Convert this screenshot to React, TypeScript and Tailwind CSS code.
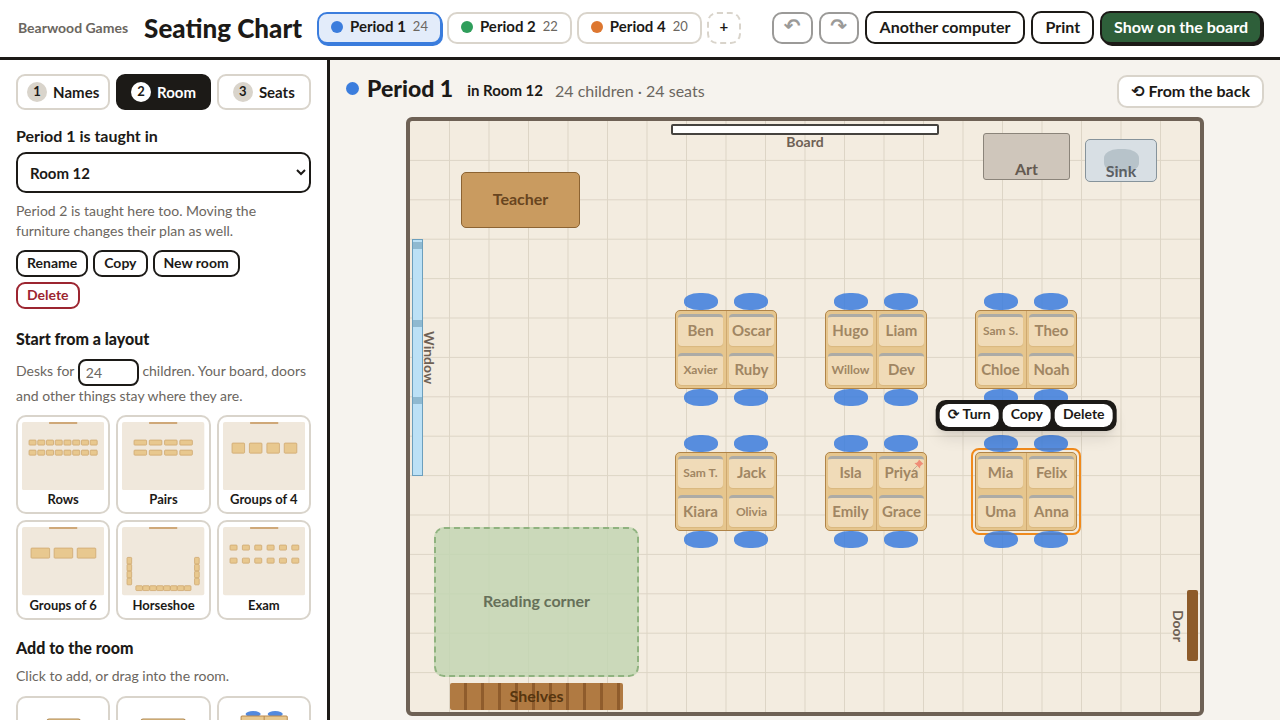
import type { CSSProperties, ReactNode } from "react";
import clsx from "clsx";

const periods = [
  { name: "Period 1", count: 24, dot: "bg-[#3b7ddd]", active: true },
  { name: "Period 2", count: 22, dot: "bg-[#2f9e5b]", active: false },
  { name: "Period 4", count: 20, dot: "bg-[#dd7730]", active: false },
];

const steps = [
  { n: 1, label: "Names" },
  { n: 2, label: "Room" },
  { n: 3, label: "Seats" },
];

type Rect = [x: number, y: number, w: number, h: number];

/** Desks on a grid of cols x rows inside an 82 x 68 thumbnail. */
function block(xs: number[], ys: number[], w: number, h: number): Rect[] {
  return ys.flatMap((y) => xs.map((x): Rect => [x, y, w, h]));
}

const layouts: { name: string; desks: Rect[] }[] = [
  { name: "Rows", desks: block([7, 15.7, 24.4, 33.1, 41.8, 50.5, 59.2, 67.9], [18, 28], 7, 5) },
  { name: "Pairs", desks: block([12, 27.2, 42.4, 57.6], [18, 28], 12.5, 5) },
  { name: "Groups of 4", desks: block([9, 26.3, 43.7, 61], [21], 12.5, 10) },
  { name: "Groups of 6", desks: block([9, 32, 55], [21], 18.5, 10) },
  {
    name: "Horseshoe",
    desks: [
      ...block([5, 72.3], [30.3, 37.2, 44.1, 51], 4.6, 6.6),
      ...block([13.8, 20.7, 27.6, 34.5, 41.4, 48.3, 55.2, 62.1], [58.5], 6.6, 4.8),
    ],
  },
  { name: "Exam", desks: block([7, 19.3, 31.6, 43.9, 56.2, 68.5], [18, 31], 7, 5) },
];

const ROOM_W = 790;
const ROOM_H = 591;

function place([x, y, w, h]: Rect): CSSProperties {
  return {
    left: `${(x / ROOM_W) * 100}%`,
    top: `${(y / ROOM_H) * 100}%`,
    width: `${(w / ROOM_W) * 100}%`,
    height: `${(h / ROOM_H) * 100}%`,
  };
}

const tables = [
  { x: 265, y: 189, names: ["Ben", "Oscar", "Xavier", "Ruby"] },
  { x: 415, y: 189, names: ["Hugo", "Liam", "Willow", "Dev"] },
  { x: 565, y: 189, names: ["Sam S.", "Theo", "Chloe", "Noah"] },
  { x: 265, y: 331, names: ["Sam T.", "Jack", "Kiara", "Olivia"] },
  { x: 415, y: 331, names: ["Isla", "Priya", "Emily", "Grace"], pinned: "Priya" },
  { x: 565, y: 331, names: ["Mia", "Felix", "Uma", "Anna"], selected: true },
];

function Heading({ children }: { children: ReactNode }) {
  return <h2 className="text-base leading-6 font-black">{children}</h2>;
}

function SmallButton({ children, danger }: { children: ReactNode; danger?: boolean }) {
  return (
    <button
      className={clsx(
        "h-[27px] rounded-[9px] border-2 bg-white px-[9px] pb-0.5 text-sm leading-5 font-bold",
        danger ? "border-[#9c2530] text-[#9c2530]" : "border-[#1c1a17]",
      )}
    >
      {children}
    </button>
  );
}

function LayoutCard({ name, desks }: { name: string; desks: Rect[] }) {
  return (
    <button className="flex flex-col items-stretch rounded-[10px] border-2 border-[#d9d4cb] bg-white px-1 pt-[5px] pb-1">
      <svg viewBox="0 0 82 68" className="w-full">
        <rect width="82" height="68" rx="2" fill="#f0e8dc" />
        <rect x="27" width="28" height="2" fill="#cfa878" />
        {desks.map(([x, y, w, h]) => (
          <rect key={`${x}-${y}`} x={x} y={y} width={w} height={h} rx="0.8" fill="#e8c88f" stroke="#d0a970" strokeWidth="0.8" />
        ))}
      </svg>
      <span className="text-[13px] leading-[18px] font-bold">{name}</span>
    </button>
  );
}

function PaletteCard({ children, label }: { children: ReactNode; label: string }) {
  return (
    <button className="flex flex-col items-stretch rounded-[10px] border-2 border-[#d9d4cb] bg-white px-1 pt-[5px] pb-1">
      <svg viewBox="0 0 82 68" className="w-full">
        {children}
      </svg>
      <span className="text-[13px] leading-[18px] font-bold">{label}</span>
    </button>
  );
}

function Sidebar() {
  return (
    <aside className="w-[330px] shrink-0 overflow-y-auto border-r-3 border-[#1c1a17] bg-white px-4 py-3.5 [scrollbar-width:none]">
      <nav className="grid grid-cols-3 gap-1.5">
        {steps.map(({ n, label }) => {
          const active = n === 2;
          return (
            <button
              key={n}
              className={clsx(
                "flex h-9 items-center justify-center gap-1.5 rounded-[9px] border-2 text-[15px] font-bold",
                active ? "border-[#1c1a17] bg-[#1c1a17] text-white" : "border-[#d9d4cb] bg-white",
              )}
            >
              <span
                className={clsx(
                  "flex size-5 items-center justify-center rounded-full text-[13px] text-[#1c1a17]",
                  active ? "bg-white" : "bg-[#d9d4cb]",
                )}
              >
                {n}
              </span>
              {label}
            </button>
          );
        })}
      </nav>

      <section className="mt-3.5">
        <label htmlFor="room" className="block text-base leading-6 font-bold">
          Period 1 is taught in
        </label>
        <select id="room" className="mt-1 h-[41px] w-full rounded-[10px] border-2 border-[#1c1a17] bg-white px-2 text-[15px] font-bold">
          <option>Room 12</option>
        </select>
        <p className="mt-2 text-sm leading-5 text-[#6b6660]">
          Period 2 is taught here too. Moving the furniture changes their plan as well.
        </p>
        <div className="mt-[9px] flex flex-wrap gap-[5px] pr-3">
          <SmallButton>Rename</SmallButton>
          <SmallButton>Copy</SmallButton>
          <SmallButton>New room</SmallButton>
          <SmallButton danger>Delete</SmallButton>
        </div>
      </section>

      <section className="mt-[18px]">
        <Heading>Start from a layout</Heading>
        <p className="mt-2 text-sm leading-5 text-[#6b6660]">
          <label htmlFor="desks">Desks for</label>{" "}
          <input
            id="desks"
            type="text"
            inputMode="numeric"
            defaultValue="24"
            className="h-[27px] w-[61px] rounded-lg border-2 border-[#1c1a17] bg-white px-1.5 align-middle"
          />{" "}
          children. Your board, doors and other things stay where they are.
        </p>
        <div className="mt-[9px] grid grid-cols-3 gap-1.5">
          {layouts.map((l) => (
            <LayoutCard key={l.name} name={l.name} desks={l.desks} />
          ))}
        </div>
      </section>

      <section className="mt-4">
        <Heading>Add to the room</Heading>
        <p className="mt-1.5 text-sm leading-5 text-[#6b6660]">Click to add, or drag into the room.</p>
        <div className="mt-2.5 grid grid-cols-3 gap-1.5">
          <PaletteCard label="Desk">
            <rect x="25" y="16" width="33" height="26" rx="2" fill="#e8c88f" stroke="#b08a55" />
          </PaletteCard>
          <PaletteCard label="Pair">
            <rect x="19" y="16" width="44" height="26" rx="2" fill="#e8c88f" stroke="#b08a55" />
          </PaletteCard>
          <PaletteCard label="Table of 4">
            <ellipse cx="30" cy="11" rx="7.5" ry="3" fill="#5389dd" />
            <ellipse cx="52" cy="11" rx="7.5" ry="3" fill="#5389dd" />
            <rect x="18" y="13" width="46" height="34" rx="1" fill="#e8c88f" stroke="#b98a50" />
            <path d="M41 13v34" stroke="#b98a50" />
          </PaletteCard>
        </div>
      </section>
    </aside>
  );
}

function Header() {
  return (
    <header className="flex h-[60px] shrink-0 items-center border-b-3 border-[#1c1a17] bg-white pr-[18px] pb-0.5 pl-[18px]">
      <span className="text-sm font-bold text-[#6b6660]">Bearwood Games</span>
      <h1 className="ml-4 text-[26px] leading-8 font-black">Seating Chart</h1>

      <nav className="ml-[15px] flex items-center gap-[5px]">
        {periods.map((p) => (
          <button
            key={p.name}
            className={clsx(
              "flex h-8 items-center gap-[7px] rounded-[10px] border-2 px-3 pb-0.5 text-[15px] font-bold",
              p.active ? "border-[#3b7ddd] bg-[#e3ecfa] shadow-[1px_2px_0_#3b7ddd]" : "border-[#d9d4cb] bg-white",
            )}
          >
            <span className={clsx("size-3 rounded-full", p.dot)} />
            {p.name}
            <span className="text-[13px] font-normal text-[#6b6660]">{p.count}</span>
          </button>
        ))}
        <button aria-label="Add period" className="h-8 w-[34px] rounded-[10px] border-2 border-dashed border-[#d9d4cb] pb-0.5 text-[15px] font-bold">
          +
        </button>
      </nav>

      <div className="ml-auto flex items-center gap-1.5 text-base font-bold">
        <button aria-label="Undo" className="h-8 w-[41px] rounded-[10px] border-2 border-[#9b9a98] pb-1 font-['DejaVu_Sans'] text-xl leading-6 text-[#9b9a98]">
          ↶
        </button>
        <button aria-label="Redo" className="h-8 w-10 rounded-[10px] border-2 border-[#9b9a98] pb-1 font-['DejaVu_Sans'] text-xl leading-6 text-[#9b9a98]">
          ↷
        </button>
        <button className="h-[33px] rounded-[10px] border-2 border-[#1c1a17] px-[13px] pb-0.5">Another computer</button>
        <button className="h-[33px] rounded-[10px] border-2 border-[#1c1a17] px-3 pb-0.5">Print</button>
        <button className="h-[33px] rounded-[10px] border-2 border-[#1c1a17] bg-[#2e5f3a] px-3 pb-0.5 text-white shadow-[2px_2px_0_#1c1a17]">
          Show on the board
        </button>
      </div>
    </header>
  );
}

function Chair({ className }: { className: string }) {
  return <span className={clsx("absolute h-[22%] w-1/3 rounded-[45%] bg-[#3b7ddd]/85", className)} />;
}

function Pin() {
  return (
    <svg viewBox="0 0 12 12" className="absolute top-0 right-0 size-3 opacity-60">
      <path d="M5.4 6.6 1 11" stroke="#9a8f88" strokeWidth="1" />
      <path d="M7 .6 11.4 5 10 5.6 8.2 7.2 8 9.6 2.4 4 4.8 3.8 6.4 2Z" fill="#ef5a4c" />
    </svg>
  );
}

function Table({ x, y, names, selected, pinned }: { x: number; y: number; names: string[]; selected?: boolean; pinned?: string }) {
  return (
    <div className="absolute" style={place([x, y, 102, 79])}>
      {selected && <span className="absolute -inset-1 rounded-lg border-2 border-[#f08a1c]" />}
      <div className="absolute inset-0 grid grid-cols-2 gap-x-1.5 gap-y-[7px] rounded-[5px] border border-[#b08448] bg-[#e6c68e] px-0.5 py-[3px]">
        <span className="absolute inset-y-0 left-1/2 w-px bg-[#cfa971]" />
        {names.map((name) => (
          <span
            key={name}
            className={clsx(
              "relative flex items-center justify-center rounded-[4px] border-t-3 border-[#acaba6] bg-[#f0dbb8] pb-0.5 font-bold text-[#a08663] shadow-[0_1px_1px_#d9b77f]",
              name.length > 5 ? "text-xs" : "text-[15px]",
            )}
          >
            {name}
            {name === pinned && <Pin />}
          </span>
        ))}
      </div>
      <Chair className="bottom-full left-[9%]" />
      <Chair className="bottom-full left-[58%]" />
      <Chair className="top-full left-[9%]" />
      <Chair className="top-full left-[58%]" />
    </div>
  );
}

function GridLines() {
  return (
    <svg className="absolute inset-0 size-full" stroke="#ddd5c6" strokeWidth="1">
      {Array.from({ length: 19 }, (_, i) => (
        <line key={`v${i}`} x1={`${(i + 1) * 5}%`} x2={`${(i + 1) * 5}%`} y1="0" y2="100%" />
      ))}
      {Array.from({ length: 14 }, (_, i) => (
        <line key={`h${i}`} x1="0" x2="100%" y1={`${((i + 1) * 100) / 15}%`} y2={`${((i + 1) * 100) / 15}%`} />
      ))}
    </svg>
  );
}

const item = "absolute flex justify-center font-bold";

function Room() {
  return (
    <div className="relative mx-auto aspect-[798/599] h-full rounded-md border-4 border-[#6e6155] bg-[#f3ece0]">
      <GridLines />

      <div className={clsx(item, "rounded-xs border-2 border-[#45433f] bg-white")} style={place([261, 3, 268, 11])} />
      <div className={clsx(item, "items-center text-sm text-[#6e6155]")} style={place([261, 12, 268, 17])}>
        Board
      </div>
      <div className={clsx(item, "items-center rounded-[5px] border border-[#8c6332] bg-[#c99b60] pb-0.5 text-base text-[#68451f]")} style={place([51, 51, 119, 56])}>
        Teacher
      </div>
      <div className={clsx(item, "items-end rounded-[3px] border border-[#8b847a] bg-[#cfc6bb] text-base leading-5 text-[#645a50]")} style={place([573, 12, 87, 47])}>
        Art
      </div>
      <div className={clsx(item, "items-end rounded-[5px] border border-[#86939b] bg-[#d8dfe4] text-base leading-5 text-[#5c6064]")} style={place([675, 18, 72, 43])}>
        <span className="absolute top-[22%] left-1/4 h-[55%] w-1/2 rounded-[40%] bg-[#b7c3ca]" />
        <span className="relative">Sink</span>
      </div>

      <div className="absolute border border-[#6c9fbd] bg-[#bce1f6]" style={place([2, 118, 11, 237])}>
        <span className="absolute inset-x-0 top-[1%] h-[3%] bg-[#8fb9d0]" />
        <span className="absolute inset-x-0 top-[34%] h-[3%] bg-[#8fb9d0]" />
        <span className="absolute inset-x-0 top-[67%] h-[3%] bg-[#8fb9d0]" />
      </div>
      <div className={clsx(item, "items-center text-sm text-[#6e6155] [writing-mode:vertical-rl]")} style={place([10, 118, 18, 237])}>
        Window
      </div>

      <div
        className={clsx(item, "items-center rounded-[10px] border-2 border-dashed border-[#8fb27f] bg-[#c3d6b3]/85 pb-0.5 text-base text-[#667059]")}
        style={place([24, 406, 205, 150])}
      >
        Reading corner
      </div>
      <div
        className={clsx(
          item,
          "items-center rounded-xs bg-[repeating-linear-gradient(to_right,#b07a42_0_14px,#8f5c2c_14px_17px)] text-base text-[#56350f]",
        )}
        style={place([40, 562, 173, 27])}
      >
        Shelves
      </div>

      <div className="absolute rounded-xs bg-[#8d5b2a]" style={place([777, 469, 11, 71])} />
      <div className={clsx(item, "items-center text-sm text-[#6e6155] [writing-mode:vertical-rl]")} style={place([759, 469, 18, 71])}>
        Door
      </div>

      {tables.map((t) => (
        <Table key={t.names[0]} {...t} />
      ))}

      {/* actions for the selected table */}
      <div className="absolute top-[47.2%] left-[78%] flex -translate-x-1/2 gap-1 rounded-[10px] bg-[#1c1a17] p-1 shadow-lg">
        {["⟳ Turn", "Copy", "Delete"].map((label) => (
          <button key={label} className="h-[23px] rounded-[9px] bg-white px-2 pb-0.5 text-sm leading-5 font-bold whitespace-nowrap">
            {label}
          </button>
        ))}
      </div>
    </div>
  );
}

export default function App() {
  return (
    <div className="flex h-screen flex-col overflow-hidden bg-[#f6f3ee] font-[Lato,'DejaVu_Sans',sans-serif] text-[#1c1a17]">
      <Header />
      <div className="flex min-h-0 flex-1">
        <Sidebar />
        <main className="flex min-w-0 flex-1 flex-col px-4 pb-1">
          <div className="flex h-[57px] shrink-0 items-center">
            <span className="size-[13px] rounded-full bg-[#3b7ddd]" />
            <h2 className="ml-2 text-[23px] font-black">Period 1</h2>
            <span className="mt-1 ml-3.5 text-[15px] font-bold">in Room 12</span>
            <span className="mt-1 ml-3 text-base text-[#6b6660]">24 children · 24 seats</span>
            <button className="mt-1.5 ml-auto h-[33px] rounded-[10px] border-2 border-[#d9d4cb] bg-white px-3 pb-0.5 text-base font-bold">
              ⟲ From the back
            </button>
          </div>
          <div className="min-h-0 flex-1">
            <Room />
          </div>
        </main>
      </div>
    </div>
  );
}
